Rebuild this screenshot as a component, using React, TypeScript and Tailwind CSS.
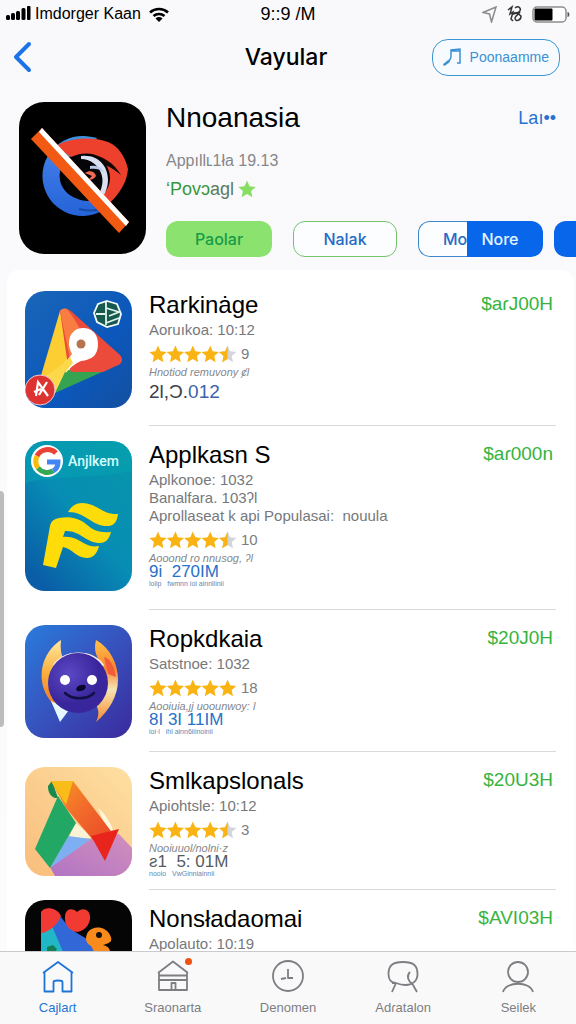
import React from "react";

const STAR = "M9 0.500l2.500 5.700 6.200.7-4.600 4.200 1.300 6.100L9 14.100l-5.400 3.100 1.300-6.100L.3 6.900l6.200-.7z";
const HALF_STAR = "M9 0.500v13.600l-5.400 3.100 1.300-6.100L.3 6.900l6.200-.7z";

function Stars({ rating }: { rating: number }) {
  return (
    <svg viewBox="0 0 88 18" className="h-[18px] w-[88px]" role="img" aria-label={`${rating} stars`}>
      {[0, 1, 2, 3, 4].map((i) => (
        <g key={i} transform={`translate(${i * 17.4} 0)`}>
          <path d={STAR} fill={i + 1 <= rating ? "#f9b414" : "#d3d5dc"} />
          {i + 0.5 === rating && <path d={HALF_STAR} fill="#f9b414" />}
        </g>
      ))}
    </svg>
  );
}

function EyeLogo() {
  return (
    <svg viewBox="0 0 127 152" className="h-full w-full" aria-hidden="true">
      <defs>
        <linearGradient id="ring" x1="0" y1="0" x2="0" y2="1">
          <stop stopColor="#3d93e0" />
          <stop offset=".4" stopColor="#3a76e4" />
          <stop offset="1" stopColor="#2563d8" />
        </linearGradient>
      </defs>
      <rect width="127" height="152" fill="#000" />
      <path d="M64 34a40 40 0 1 0 27 69L80 90a23 23 0 1 1-14-39l12-15c-4-1-9-2-14-2z" fill="url(#ring)" />
      <path d="M37 44c13-8 36-10 52-4 10 4 17 14 20 27-1 13-8 24-19 35l-9-10c6-6 9-17 8-25C85 54 71 47 52 55z" fill="#ed402d" />
      <path d="M70 52c13 1 25 9 32 21-9-8-19-12-29-14z" fill="#140605" />
      <circle cx="68" cy="76" r="23" fill="#050507" />
      <path d="M62 54c17-2 27 10 27 24 0 7-3 14-6 18l-3-4c3-6 5-14 2-21-3-8-11-14-20-14z" fill="#d9e0f2" />
      <path d="M71 64c7-1 12 2 14 6-5-3-9-4-14-3z" fill="#b9cbea" />
      <path d="M66 71c4-3 10-2 11 3-2 3-5 4-8 4l4-4z" fill="#ee6a53" />
      <path d="M60 107c8 2 18 2 26-1" stroke="#174ba8" fill="none" strokeWidth="2" />
      <path d="M23 26l87 94-10 11L12 37z" fill="#f25a14" />
      <path d="M23 26l87 94-3 4L20 30z" fill="#fff" />
    </svg>
  );
}

function MapsLogo() {
  return (
    <svg viewBox="0 0 107 117" className="h-full w-full" preserveAspectRatio="none" aria-hidden="true">
      <defs>
        <linearGradient id="mapsBg" x1="0" y1="0" x2="1" y2="1">
          <stop stopColor="#1a66b8" />
          <stop offset=".6" stopColor="#0b57bb" />
          <stop offset="1" stopColor="#1450a0" />
        </linearGradient>
      </defs>
      <rect width="107" height="117" fill="url(#mapsBg)" />
      <path d="M35 20L15 88l15 14 20-30z" fill="#fcce33" />
      <path d="M42 79l44-2-56 25z" fill="#35a350" />
      <path d="M35 20c3-3 8-3 12 1l48 43c4 5 2 9-4 11l-13 6H46l-4-13z" fill="#ec4a3a" />
      <path d="M35 20c1-2 4-3 7-2 6 8 12 16 15 26L45 68z" fill="#f97c43" />
      <path d="M44 52c0-9 6-15 14-15 9 0 15 6 15 16 0 12-7 16-17 17-7 3-11 7-17 14l-9 18-11-16c13-7 21-13 28-23-2-4-3-7-3-11z" fill="#fff" />
      <path d="M16 88c12-8 21-13 29-22l3 6c-7 7-12 17-18 30z" fill="#fcd94b" />
      <path d="M30 102l10-21 7 4z" fill="#35a350" />
      <circle cx="56" cy="53" r="4.500" fill="#b5734f" />
      <path d="M82 10l10 3 4 10-3 10-11 3-10-5-3-9 4-9z" fill="#17594f" stroke="#f2fbf8" strokeWidth="1.800" />
      <path d="M81 11v23M81 17l13 4-10 4M94 27l-13 5M71 23h9" stroke="#e2f4ee" strokeWidth="1.800" fill="none" />
      <circle cx="15" cy="99" r="15" fill="#dd3431" stroke="#f0c7d0" strokeWidth="1" />
      <path d="M11 105l2-14 10 14M9 101l7-3M14 104l8-13" stroke="#fff" strokeWidth="2.200" fill="none" />
    </svg>
  );
}

function ApplkasnLogo() {
  return (
    <div className="relative h-full w-full">
      <svg viewBox="0 0 107 150" className="h-full w-full" preserveAspectRatio="none" aria-hidden="true">
        <defs>
          <linearGradient id="tealBg" x1="1" y1="0" x2="0.2" y2="1">
            <stop stopColor="#0896a8" />
            <stop offset=".55" stopColor="#078db4" />
            <stop offset="1" stopColor="#0a5da6" />
          </linearGradient>
        </defs>
        <rect width="107" height="150" fill="url(#tealBg)" />
        <path d="M0 0h107v30C70 38 30 34 0 42z" fill="#06a9b4" opacity=".4" />
        <circle cx="22" cy="20" r="16" fill="#fff" />
        <g fill="none" strokeWidth="5">
          <path d="M31 12A12 12 0 0 0 12 15" stroke="#ea4335" />
          <path d="M12 15a12 12 0 0 0 1 12" stroke="#fbbc05" />
          <path d="M13 27a12 12 0 0 0 15 3" stroke="#34a853" />
          <path d="M28 30c4-2 5-5 5-9H22" stroke="#4285f4" />
        </g>
        <path d="M43 71c3-5 7-9 14-9 15 0 20 12 36 11-1 7-3 11-9 12-18 1-22-14-41-14z" fill="#fddc09" />
        <path d="M34 77c16-3 24 3 32 10 6 4 13 5 20 4-2 7-5 11-11 11-14 0-20-13-35-12l-2 6c17-2 20 12 36 9-2 8-6 12-12 12-11 0-14-9-24-11l-7 21-13-3 7-39c1-5 4-7 9-8z" fill="#fddc09" />
      </svg>
      <span className="absolute top-2.5 left-[43px] font-[Roboto,sans-serif] text-[14px] leading-5 font-medium text-[#d5ffff]">
        Anjlkem
      </span>
    </div>
  );
}

function FoxLogo() {
  return (
    <svg viewBox="0 0 107 113" className="h-full w-full" preserveAspectRatio="none" aria-hidden="true">
      <defs>
        <linearGradient id="foxBg" x1="0" y1="0" x2="1" y2="1">
          <stop stopColor="#2a7bdc" />
          <stop offset=".5" stopColor="#3653bd" />
          <stop offset="1" stopColor="#3b2a9e" />
        </linearGradient>
        <linearGradient id="furLeft" x1="0" y1="0" x2="0" y2="1">
          <stop stopColor="#ffe9a0" />
          <stop offset=".5" stopColor="#fbae3a" />
          <stop offset=".8" stopColor="#f58a2c" />
        </linearGradient>
        <linearGradient id="furRight" x1="0" y1="0" x2="0" y2="1">
          <stop stopColor="#ffc24b" />
          <stop offset=".35" stopColor="#f7862f" />
          <stop offset=".6" stopColor="#f6e6b4" />
          <stop offset="1" stopColor="#f58a2c" />
        </linearGradient>
        <radialGradient id="face" cx=".35" cy=".35">
          <stop stopColor="#5b48c4" />
          <stop offset="1" stopColor="#3a269c" />
        </radialGradient>
      </defs>
      <rect width="107" height="113" fill="url(#foxBg)" />
      <path d="M36 15C22 24 15 40 17 56c1 11 8 20 14 26l8-4V36c-3-6-4-13-3-21z" fill="url(#furLeft)" />
      <path d="M71 15c14 8 22 23 22 40 0 16-9 31-22 42 3-6 3-11 1-15l3-46c-5-6-6-13-4-21z" fill="url(#furRight)" />
      <path d="M79 32c6 1 10 9 12 20l-8-3z" fill="#f15d38" />
      <path d="M26 76l9 21 9-12z" fill="#e7f7ff" />
      <path d="M29 41c11-16 38-16 49 0" stroke="#fbefe9" strokeWidth="3" fill="none" />
      <circle cx="53" cy="58" r="30" fill="url(#face)" />
      <circle cx="40" cy="55" r="5" fill="#fff" />
      <circle cx="67" cy="55" r="5" fill="#fff" />
      <ellipse cx="56" cy="63" rx="5" ry="3" fill="#09072d" transform="rotate(-20 56 63)" />
      <path d="M40 68c7 7 22 7 29 0" stroke="#111043" strokeWidth="2.500" fill="none" strokeLinecap="round" />
    </svg>
  );
}

function RibbonLogo() {
  return (
    <svg viewBox="0 0 107 109" className="h-full w-full" preserveAspectRatio="none" aria-hidden="true">
      <defs>
        <linearGradient id="peach" x1="1" y1="0" x2="0" y2="1">
          <stop stopColor="#fde0a2" />
          <stop offset="1" stopColor="#f9bd7c" />
        </linearGradient>
        <linearGradient id="arm" x1="0" y1="0" x2="1" y2="1">
          <stop stopColor="#f6991f" />
          <stop offset=".5" stopColor="#f26b2b" />
          <stop offset="1" stopColor="#e94a28" />
        </linearGradient>
        <linearGradient id="lilac" x1="0" y1="1" x2="1" y2="0">
          <stop stopColor="#b174c4" />
          <stop offset="1" stopColor="#d38fbd" />
        </linearGradient>
      </defs>
      <rect width="107" height="109" fill="url(#peach)" />
      <path d="M25 100l42-29 27-4 13 14v28H30z" fill="url(#lilac)" />
      <path d="M50 55l18 16-24 0z" fill="#fbf3d6" />
      <path d="M43 69l23 3-41 29z" fill="#7eaff2" />
      <path d="M73 41c6 5 12 13 15 22l-5 2z" fill="#fff6df" />
      <path d="M23 19l4-5 6 17h-3c-5-2-7-6-7-12z" fill="#178a4c" />
      <path d="M33 29l18 27-26 45-15-19z" fill="#22a764" />
      <path d="M26 14h22l38 50-18 9-27-32z" fill="url(#arm)" />
      <path d="M26 14h22l-7 24z" fill="#f8bd18" />
      <path d="M66 69l28-7-14 32z" fill="#e8241c" />
    </svg>
  );
}

function GameLogo() {
  return (
    <svg viewBox="0 0 107 110" className="h-full w-full" preserveAspectRatio="none" aria-hidden="true">
      <rect width="107" height="110" fill="#050505" />
      <path d="M16 28l20-11c8 12 20 20 32 24l10 10h8v59H16z" fill="#3267d8" />
      <path d="M16 32l11-6 17 40v44H16z" fill="#21b7c7" />
      <path d="M22 47l6-2 4 4-3 5-7-1z" fill="#137f55" />
      <path d="M16 12c3-6 16-5 20 4-3 8-10 14-18 17h-2z" fill="#f13a35" />
      <path d="M52 12c7-6 14-1 13 7-1 7-6 12-13 13-8-1-13-8-12-16 1-8 8-8 12-4z" fill="#f13b32" />
      <path d="M63 32c5-7 18-6 22 3 3 6 1 8-7 10 4 1 7 3 7 7l-14 3-5-9c-6-3-6-9-3-14z" fill="#f98a1c" />
      <circle cx="74" cy="35" r="3" fill="#111" />
    </svg>
  );
}

type Listing = {
  name: string;
  lines: string[];
  price: string;
  logo: React.ReactNode;
  logoSize: string;
  rating?: number;
  reviews?: string;
  note?: string;
  total?: React.ReactNode;
  totalStyle?: string;
  micro?: string;
};

const listings: Listing[] = [
  {
    name: "Rarkinȧge",
    lines: ["Aoruıkoa: 10:12"],
    price: "$aɾJ00H",
    logo: <MapsLogo />,
    logoSize: "mt-[15px] mb-[18px] h-[117px]",
    rating: 4.5,
    reviews: "9",
    note: "Hnotiod remuvony ȼl",
    total: (
      <>
        2l,Ɔ.<span className="text-[#3c63ac]">012</span>
      </>
    ),
    totalStyle: "text-[19px] leading-[28px] text-[#3c4047]",
  },
  {
    name: "Applkasn S",
    lines: ["Aplkonoe: 1032", "Banalfara. 103ʔl", "Aprollaseat k api Populasai:  nouula"],
    price: "$aɾ000n",
    logo: <ApplkasnLogo />,
    logoSize: "mt-[15px] mb-[19px] h-[150px]",
    rating: 4.5,
    reviews: "10",
    note: "Aooond ro nnusog, ʔl",
    total: "9i  270IM",
    totalStyle: "text-[17px] leading-4 text-[#2671c9]",
    micro: "loiip   fwmnn ioi ainnliinii",
  },
  {
    name: "Ropkdkaia",
    lines: ["Satstnoe: 1032"],
    price: "$20J0H",
    logo: <FoxLogo />,
    logoSize: "mt-[15px] mb-[14px] h-[113px]",
    rating: 5,
    reviews: "18",
    note: "Aooiuia,ȷj uoounwoy: l",
    total: "8I 3I 11IM",
    totalStyle: "text-[17px] leading-4 text-[#2671c9]",
    micro: "loi·l   ihl ainn6iiinoinii",
  },
  {
    name: "Smlkapslonals",
    lines: ["Apiohtsle: 10:12"],
    price: "$20U3H",
    logo: <RibbonLogo />,
    logoSize: "mt-[15px] mb-[14px] h-[109px]",
    rating: 4.5,
    reviews: "3",
    note: "Nooiuuol/nolni·z",
    total: "ƨ1  5: 01M",
    totalStyle: "text-[17px] leading-4 text-[#555b61]",
    micro: "nooio   VwGinniainnii",
  },
  {
    name: "Nonsładaomai",
    lines: ["Apolauto: 10:19"],
    price: "$AVI03H",
    logo: <GameLogo />,
    logoSize: "mt-2.5 mb-[14px] h-[110px]",
  },
];

function ListingRow({ item }: { item: Listing }) {
  return (
    <li className="flex gap-[17px] px-[18px]">
      <div className={`w-[107px] shrink-0 overflow-hidden rounded-[20px] ${item.logoSize}`}>{item.logo}</div>
      <div className="flex min-w-0 flex-1 justify-between border-b border-[#d9dadd] pt-4">
        <div className="min-w-0">
          <h3 className="text-[24px] leading-[26px] whitespace-nowrap text-black">{item.name}</h3>
          <div className="py-[3px] text-[15px] leading-[18px] text-[#76787b]">
            {item.lines.map((line) => (
              <p key={line} className="whitespace-pre">{line}</p>
            ))}
          </div>
          {item.rating && (
            <div className="flex h-6 items-center gap-1">
              <Stars rating={item.rating} />
              <span className="text-[15px] leading-6 text-[#7b7d80]">{item.reviews}</span>
            </div>
          )}
          {item.note && <p className="text-[11px] leading-3 text-[#85878b] italic">{item.note}</p>}
          {item.total && <p className={`whitespace-pre ${item.totalStyle}`}>{item.total}</p>}
          {item.micro && <p className="text-[7px] leading-[7px] whitespace-pre text-[#5f86b4]">{item.micro}</p>}
        </div>
        <p className="pr-[3px] text-[19px] leading-6 text-[#36b43d]">{item.price}</p>
      </div>
    </li>
  );
}

function StatusBar() {
  return (
    <div className="grid h-7 grid-cols-3 items-center px-1.5 text-[16px] text-black">
      <div className="flex items-center gap-1 whitespace-nowrap">
        <svg viewBox="0 0 25 16" className="h-4 w-[25px] shrink-0" aria-hidden="true">
          <rect x="0" y="9" width="4" height="5" rx="1.500" />
          <rect x="5" y="7" width="4" height="7" rx="1.500" />
          <rect x="10" y="5" width="4" height="9" rx="1.500" />
          <rect x="15.500" y="2" width="4" height="12" rx="1.500" />
          <rect x="21" y="0" width="3.500" height="14" rx="1" />
        </svg>
        <span>Imdorger Kaan</span>
        <svg viewBox="0 0 20 15" className="ml-1 h-[15px] w-5 shrink-0" aria-hidden="true">
          <path d="M1 5.500a13.500 13.500 0 0 1 18 0M4.500 9a8.500 8.500 0 0 1 11 0" fill="none" stroke="#000" strokeWidth="2.600" />
          <path d="M6.500 11.500a5 5 0 0 1 7 0L10 15z" />
        </svg>
      </div>
      <p className="text-center text-[18px]">9::9 /M</p>
      <div className="flex items-center justify-end gap-2.5">
        <svg viewBox="0 0 15 17" className="h-[17px] w-[15px]" fill="none" stroke="#8a8a8a" strokeWidth="1.500" aria-hidden="true">
          <path d="M1 6.500L14 1 9.500 16 7.500 8z" />
        </svg>
        <svg viewBox="0 0 15 18" className="h-[18px] w-[15px]" fill="none" stroke="#333" strokeWidth="1.500" aria-hidden="true">
          <path d="M1 5l4-3-2 7 3-2-2 7 2 2M8 3c4-3 7 1 4 4L7 9c0-3 5 0 7 2 0 5-6 6-6 2 0-2 4-4 5-6" />
        </svg>
        <svg viewBox="0 0 38 17" className="h-[17px] w-[38px]" aria-hidden="true">
          <rect x="1" y="1" width="33" height="15" rx="4" fill="#fff" stroke="#8d8d8d" strokeWidth="1.500" />
          <rect x="2.500" y="2.500" width="18" height="12" rx="1" />
          <path d="M35.500 6c2.500 0 2.500 5 0 5z" fill="#555" />
        </svg>
      </div>
    </div>
  );
}

const tabs = [
  {
    label: "Cajlaɾt",
    active: true,
    icon: <path d="M1 13L16 2l15 11M2.500 12.500V31.500h9V22c0-2 9-2 9 0v9.500h9V12.500" />,
  },
  {
    label: "Sraonarta",
    dot: true,
    icon: <path d="M1 13L16 1.500l15 11.500M2 13v17h28V13M2 15.500h28M2 20h28M14.500 30v-7h4v7" />,
  },
  { label: "Denomen", icon: <path d="M16 1a15 15 0 1 1 0 30a15 15 0 1 1 0-30M16 9v9h5M9 19l5-1" /> },
  {
    label: "Adɾatalon",
    icon: <path d="M9 23C4 23 1.500 19 1.500 14 1.500 6 5 2 16 2s14.500 4 14.500 12c0 7-5 11-12 11-4 0-7-1-9.500-2M9 23l-4 9M5 23l4 0M23 12c-4 4-2 9 3 13l4 7" />,
  },
  { label: "Seilek", icon: <path d="M16 2a10 10 0 1 1 0 20a10 10 0 1 1 0-20M1 32c3-11 27-11 30 0" /> },
];

export default function App() {
  return (
    <div className="relative flex h-dvh flex-col overflow-hidden bg-linear-to-b from-[#f9f9fb] to-[#fcfcfd] font-['Liberation_Sans',Arial,sans-serif]">
      <header>
        <StatusBar />
        <div className="grid h-[58px] grid-cols-[1fr_auto_1fr] items-center pr-4 pl-3">
          <button aria-label="Back" className="w-6">
            <svg viewBox="0 0 20 34" className="h-[34px] w-5" fill="none" stroke="#1c72e8" strokeWidth="4" strokeLinecap="round" strokeLinejoin="round" aria-hidden="true">
              <path d="M17 4L4 17l13 13" />
            </svg>
          </button>
          <h1 className="font-[Inter,sans-serif] text-[23px] leading-8 font-medium text-black">Vayular</h1>
          <button className="flex h-[37px] items-center gap-2 justify-self-end rounded-2xl border border-[#3d95d4] bg-[#f7fbff] px-2.5 text-[14px] text-[#3b91d3]">
            <svg viewBox="0 0 19 18" className="h-[18px] w-[19px]" fill="none" stroke="currentColor" strokeWidth="1.500" aria-hidden="true">
              <path d="M4 14c2-1 4-3 4-6V2l9-1v14h-3M8 3h9" />
              <path d="M1.500 16.500l4-3" strokeWidth="2.500" strokeLinecap="round" />
            </svg>
            Poonaamme
          </button>
        </div>
      </header>

      <section className="flex gap-5 pt-4 pl-[19px]">
        <div className="h-[152px] w-[127px] shrink-0 overflow-hidden rounded-[25px]">
          <EyeLogo />
        </div>
        <div className="min-w-0 flex-1">
          <div className="flex items-center justify-between pr-5">
            <h2 className="text-[28px] leading-8 text-black">Nnoanasia</h2>
            <a href="#details" className="text-[18px] leading-8 text-[#2672cf]">Laı••</a>
          </div>
          <p className="pt-[15px] text-[16px] leading-6 text-[#85878b]">Appıllʟ1ła 19.13</p>
          <p className="flex items-center gap-1 pt-0.5 text-[18px] leading-7 text-[#36973c]">
            <span>
              ʻPovɔ<span className="text-[#5d7860]">agl</span>
            </span>
            <svg viewBox="0 0 18 18" className="h-[18px] w-[18px]" aria-hidden="true">
              <path d={STAR} fill="#88de63" />
            </svg>
          </p>
          <div className="flex pt-[18px] font-[Inter,sans-serif] text-[16px] font-medium">
            <button className="h-9 w-[106px] shrink-0 rounded-xl bg-[#8ce26e] text-[#169b48]">Paolar</button>
            <button className="ml-[21px] h-9 w-[104px] shrink-0 rounded-xl border border-[#75c46c] bg-[#fbfdff] text-[#256bc6]">Nalak</button>
            <button className="ml-[21px] h-9 w-[49px] shrink-0 rounded-l-xl border border-r-0 border-[#3d87cc] bg-[#fbfdff] pl-6 text-left text-[#256bc6]">Mo</button>
            <button className="h-9 w-[76px] shrink-0 rounded-r-xl bg-[#0866eb] pr-2.5 text-[#e4f4ff]">Nore</button>
            <button aria-label="More" className="ml-[11px] h-9 w-20 shrink-0 rounded-xl bg-[#0866eb]" />
          </div>
        </div>
      </section>

      <main className="mt-[13px] mr-0.5 ml-[7px] min-h-0 flex-1 overflow-hidden rounded-t-xl bg-white pt-1.5">
        <ul>
          {listings.map((item) => (
            <ListingRow key={item.name} item={item} />
          ))}
        </ul>
      </main>
      <div className="absolute top-[491px] left-0 h-[236px] w-1 rounded-r bg-[#bcbcbe]" />

      <nav className="grid h-[73px] shrink-0 grid-cols-5 border-t border-[#c9cacd] bg-[#f9f9fa]">
        {tabs.map((tab) => (
          <a
            key={tab.label}
            href={`#${tab.label}`}
            className={`flex flex-col items-center gap-1 pt-2 text-[13px] leading-5 ${tab.active ? "text-[#1c75d6]" : "text-[#7d7e82]"}`}
          >
            <span className="relative">
              <svg viewBox="0 0 32 34" className="h-[34px] w-8" fill="none" stroke="currentColor" strokeWidth="1.800" strokeLinejoin="round" aria-hidden="true">
                {tab.icon}
              </svg>
              {tab.dot && <span className="absolute -top-0.5 -right-[3px] size-[7px] rounded-full bg-[#ee5112]" />}
            </span>
            {tab.label}
          </a>
        ))}
      </nav>
    </div>
  );
}
